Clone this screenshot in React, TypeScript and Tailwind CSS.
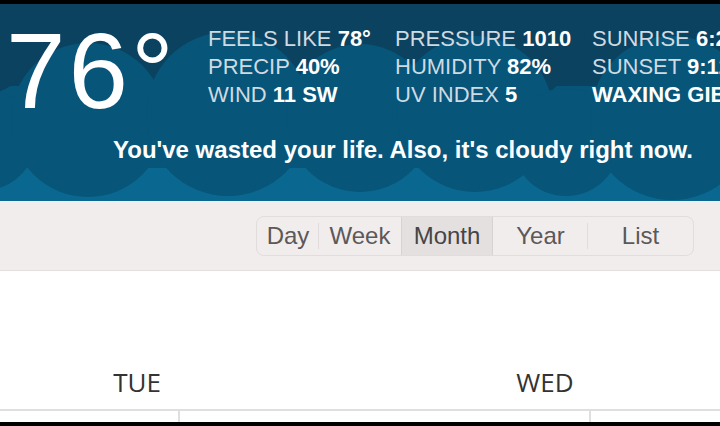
import React from "react";

// weather strip numbers
const stats: [string, string][][] = [
  [
    ["FEELS LIKE", "78°"],
    ["PRECIP", "40%"],
    ["WIND", "11 SW"],
  ],
  [
    ["PRESSURE", "1010"],
    ["HUMIDITY", "82%"],
    ["UV INDEX", "5"],
  ],
  [
    ["SUNRISE", "6:21"],
    ["SUNSET", "9:12"],
    ["", "WAXING GIBBOUS"],
  ],
];

const colW = ["w-[187px]", "w-[197px]", "w-[240px]"];

const views = [
  { label: "Day", w: "w-[62px]", sep: "short" },
  { label: "Week", w: "w-[82px]", sep: "none" },
  { label: "Month", w: "w-[92px]", sep: "none", active: true },
  { label: "Year", w: "w-[95px]", sep: "short" },
  { label: "List", w: "w-[105px]", sep: "none" },
];

function Clouds() {
  return (
    <svg
      className="absolute inset-0"
      width="720"
      height="197"
      viewBox="0 4 720 197"
      preserveAspectRatio="none"
    >
      <rect x="0" y="0" width="720" height="210" fill="#0b4260" />
      {/* middle band */}
      <rect x="0" y="86" width="720" height="130" fill="#075579" />
      <circle cx="-20" cy="40" r="55" fill="#0b4260" />
      <circle cx="110" cy="28" r="84" fill="#0b4260" />
      <circle cx="480" cy="10" r="108" fill="#0b4260" />
      <circle cx="690" cy="20" r="80" fill="#0b4260" />
      {/* bottom band */}
      <rect x="0" y="168" width="720" height="50" fill="#0a6890" />
      <circle cx="-15" cy="140" r="50" fill="#075579" />
      <circle cx="88" cy="120" r="77" fill="#075579" />
      <circle cx="228" cy="114" r="82" fill="#075579" />
      <circle cx="360" cy="118" r="74" fill="#075579" />
      <circle cx="475" cy="114" r="78" fill="#075579" />
      <circle cx="566" cy="142" r="54" fill="#075579" />
      <circle cx="672" cy="118" r="82" fill="#075579" />
    </svg>
  );
}

export default function App() {
  return (
    <div className="w-[720px] h-[426px] bg-black overflow-hidden flex flex-col font-['Liberation_Sans',Arial,sans-serif]">
      <div className="h-[4px] shrink-0" />

      <header className="relative h-[197px] shrink-0 overflow-hidden text-white">
        <Clouds />
        <div className="relative flex h-[84px] mt-[21px] whitespace-nowrap">
          <div className="w-[208px] shrink-0 pl-[6px] -mt-[7px] h-[106px] text-[107px] leading-[106px] tracking-[3px]">
            76°
          </div>
          {stats.map((col, i) => (
            <div key={i} className={`${colW[i]} shrink-0 text-[22px] leading-[28px]`}>
              {col.map(([k, v], j) => (
                <div key={j}>
                  {k && <span className="text-[#cfdae2]">{k} </span>}
                  <span className="font-bold">{v}</span>
                </div>
              ))}
            </div>
          ))}
        </div>
        <p className="relative mt-[26px] pl-[113px] text-[24px] leading-[30px] font-bold whitespace-nowrap">
          You've wasted your life. Also, it's cloudy right now.
        </p>
      </header>

      <div className="h-[70px] shrink-0 bg-[#f2eded] border-b border-[#e4dfdf] flex items-center justify-end pr-[26px]">
        <div className="flex h-[40px] rounded-[8px] border border-[#e2dddd] overflow-hidden">
          {views.map((v) => (
            <div
              key={v.label}
              className={`${v.w} relative flex items-center justify-center text-[24px] ${
                v.active
                  ? "bg-[#e4e0e0] text-[#474545] border-x border-[#d8d3d3]"
                  : "text-[#5b5959]"
              }`}
            >
              {v.label}
              {v.sep === "short" && (
                <span className="absolute right-0 top-[6px] bottom-[6px] w-px bg-[#e0dcdc]" />
              )}
            </div>
          ))}
        </div>
      </div>

      <div className="h-[138px] shrink-0 bg-white flex items-end pb-[9px] font-['Open_Sans',sans-serif] text-[26px] leading-[36px] text-[#333]">
        <div className="w-[274px] shrink-0 text-center">TUE</div>
        <div className="w-[542px] shrink-0 text-center">WED</div>
      </div>

      <div className="h-[13px] shrink-0 bg-white border-t-2 border-[#dfdfdf] flex">
        <div className="w-[180px] shrink-0 border-r-2 border-[#dfdfdf]" />
        <div className="w-[411px] shrink-0 border-r-2 border-[#dfdfdf]" />
        <div className="flex-1" />
      </div>
    </div>
  );
}
